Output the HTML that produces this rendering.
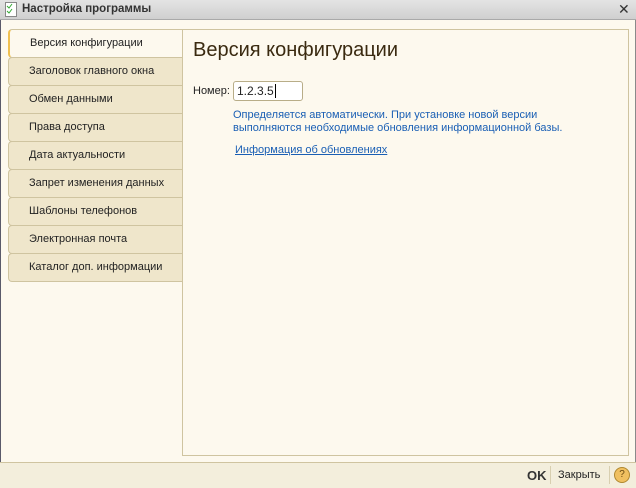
<!DOCTYPE html>
<html><head><meta charset="utf-8"><style>
body{margin:0;width:636px;height:487px;background:#fdf9ee;font-family:"Liberation Sans",sans-serif;font-size:11px;position:relative;overflow:hidden;color:#222}
.title{position:absolute;left:0;top:0;width:636px;height:19px;background:linear-gradient(#e4e4e4,#cfcfcf);border-bottom:1px solid #a9a9a9}
.title span{position:absolute;left:22px;top:3px;font-weight:bold;font-size:11.5px;color:#333}
.frame{position:absolute;left:0;top:20px;width:1px;height:442px;background:#5a5a6a}
.frameR{position:absolute;right:0;top:20px;width:1px;height:442px;background:#8a8a8a}
.tab{position:absolute;left:8px;width:173px;height:27px;background:#efe6cb;border:1px solid #cfc4a0;border-right:none;border-radius:4px 0 0 4px}
.tab span{position:absolute;left:20px;top:7px}
.tab.a{background:#fdf9ee;border-left:2px solid #f0c050}
.panel{position:absolute;left:182px;top:29px;width:445px;height:425px;border:1px solid #cfc4a0;background:#fdf9ee}
.bot{position:absolute;left:0;top:462px;width:636px;height:25px;background:#f3eedc;border-top:1px solid #cfc4a0}
</style></head><body>
<div class="title"><svg style="position:absolute;left:5px;top:2px" width="12" height="15"><rect x=".5" y=".5" width="11" height="14" fill="#fff" stroke="#888"/><path d="M2 4l2 2 3-4M2 9l2 2 3-4" stroke="#3a3" fill="none"/></svg><span>Настройка программы</span><span style="left:618px;top:1px;font-weight:normal;font-size:14px">✕</span></div>
<div class="frame"></div><div class="frameR"></div>
<div class="tab a" style="top:29px"><span>Версия конфигурации</span></div>
<div class="tab" style="top:57px"><span>Заголовок главного окна</span></div>
<div class="tab" style="top:85px"><span>Обмен данными</span></div>
<div class="tab" style="top:113px"><span>Права доступа</span></div>
<div class="tab" style="top:141px"><span>Дата актуальности</span></div>
<div class="tab" style="top:169px"><span>Запрет изменения данных</span></div>
<div class="tab" style="top:197px"><span>Шаблоны телефонов</span></div>
<div class="tab" style="top:225px"><span>Электронная почта</span></div>
<div class="tab" style="top:253px"><span>Каталог доп. информации</span></div>
<div class="panel"></div>
<div style="position:absolute;left:193px;top:39px;font-size:20px;color:#3a2a10">Версия конфигурации</div>
<div style="position:absolute;left:193px;top:85px">Номер:</div>
<div style="position:absolute;left:233px;top:81px;width:68px;height:18px;border:1px solid #b8ad88;border-radius:3px;background:#fff"><span style="position:absolute;left:3px;top:2px;font-size:12px">1.2.3.5<span style="border-left:1px solid #000;margin-left:1px"></span></span></div>
<div style="position:absolute;left:233px;top:109px;color:#1a5fb4;line-height:13px">Определяется автоматически. При установке новой версии<br>выполняются необходимые обновления информационной базы.</div>
<div style="position:absolute;left:235px;top:144px;color:#1a5fb4;text-decoration:underline">Информация об обновлениях</div>
<div class="bot">
<span style="position:absolute;left:527px;top:5px;font-weight:bold;font-size:13px;color:#333">OK</span>
<div style="position:absolute;left:550px;top:3px;width:1px;height:18px;background:#d8cfb0"></div>
<span style="position:absolute;left:558px;top:6px">Закрыть</span>
<div style="position:absolute;left:609px;top:3px;width:1px;height:18px;background:#d8cfb0"></div>
<div style="position:absolute;left:614px;top:4px;width:14px;height:14px;border-radius:50%;background:#f0c060;border:1px solid #b08830;font-size:10px;text-align:center;line-height:14px;color:#6a4a10">?</div>
</div>
</body></html>
